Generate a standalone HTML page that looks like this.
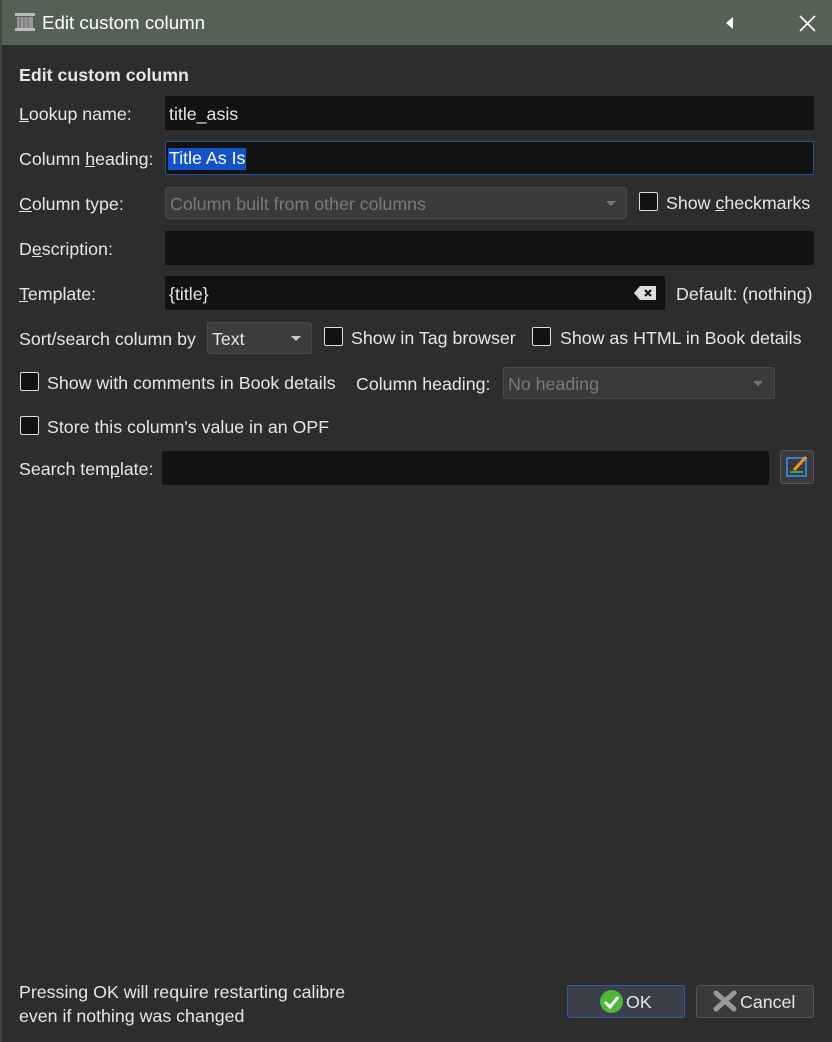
<!DOCTYPE html>
<html><head><style>
body{margin:0;width:832px;height:1042px;background:#2d2d2d;font-family:"Liberation Sans",sans-serif;font-size:17.8px;color:#e6e6e6;position:relative;overflow:hidden}
div,span{position:absolute;box-sizing:border-box}
.t{white-space:nowrap;line-height:20px}
.f{background:#121212;border-radius:2px}
.cb{width:19px;height:19px;border:1.5px solid #ddd;background:#121212;border-radius:2px}
.dd{background:#3a3a3a;border:1px solid #4a4a4a;border-radius:3px;color:#777}
.arr{width:0;height:0;border-left:5px solid transparent;border-right:5px solid transparent;border-top:5px solid #777}
u{text-decoration:underline}
</style></head><body>
<div style="left:0;top:0;width:832px;height:45px;background:#566155"></div>
<div style="left:0;top:0;width:2px;height:1042px;background:#3d4a3d"></div>
<svg style="position:absolute;left:14px;top:12px" width="22" height="20"><rect x="1" y="1" width="20" height="3" fill="#bbb"/><rect x="3" y="5" width="16" height="11" fill="#999"/><g stroke="#666"><line x1="6" y1="5" x2="6" y2="16"/><line x1="10" y1="5" x2="10" y2="16"/><line x1="14" y1="5" x2="14" y2="16"/></g><rect x="1" y="16" width="20" height="3" fill="#bbb"/></svg>
<div class="t" style="left:42px;top:13px;color:#fff;font-size:18.7px">Edit custom column</div>
<div style="left:726px;top:17px;width:0;height:0;border-top:6px solid transparent;border-bottom:6px solid transparent;border-right:7px solid #fff"></div>
<svg style="position:absolute;left:799px;top:15px" width="17" height="17"><path d="M1 1L16 16M16 1L1 16" stroke="#fff" stroke-width="1.6"/></svg>

<div class="t" style="left:19px;top:65px;font-weight:bold">Edit custom column</div>

<div class="t" style="left:19px;top:104px"><u>L</u>ookup name:</div>
<div class="f" style="left:165px;top:96px;width:649px;height:34px"></div>
<div class="t" style="left:169px;top:104px">title_asis</div>

<div class="t" style="left:19px;top:149px">Column <u>h</u>eading:</div>
<div class="f" style="left:165px;top:141px;width:649px;height:34px;border:1px solid #2a4f9a"></div>
<div class="t" style="left:168px;top:148px;background:#1252c8;color:#fff;padding:0 1px;height:22px">Title As Is</div>

<div class="t" style="left:19px;top:194px"><u>C</u>olumn type:</div>
<div class="dd" style="left:165px;top:187px;width:462px;height:32px"></div>
<div class="t" style="left:170px;top:194px;color:#7a7a7a">Column built from other columns</div>
<div class="arr" style="left:606px;top:201px"></div>
<div class="cb" style="left:639px;top:192px"></div>
<div class="t" style="left:666px;top:193px">Show <u>c</u>heckmarks</div>

<div class="t" style="left:19px;top:239px">D<u>e</u>scription:</div>
<div class="f" style="left:165px;top:231px;width:649px;height:34px"></div>

<div class="t" style="left:19px;top:284px"><u>T</u>emplate:</div>
<div class="f" style="left:165px;top:276px;width:500px;height:34px"></div>
<div class="t" style="left:169px;top:284px">{title}</div>
<svg style="position:absolute;left:633px;top:285px" width="24" height="16"><path d="M7 1H23V15H7L1 8Z" fill="#ddd"/><path d="M12 5L18 11M18 5L12 11" stroke="#121212" stroke-width="2.2"/></svg>
<div class="t" style="left:676px;top:284px">Default: (nothing)</div>

<div class="t" style="left:19px;top:329px">Sort/search column by</div>
<div class="dd" style="left:207px;top:322px;width:105px;height:32px;background:#3c3c3c;color:#e6e6e6"></div>
<div class="t" style="left:212px;top:329px">Text</div>
<div class="arr" style="left:291px;top:336px;border-top-color:#ccc"></div>
<div class="cb" style="left:324px;top:327px"></div>
<div class="t" style="left:351px;top:328px">Show in Tag browser</div>
<div class="cb" style="left:532px;top:327px"></div>
<div class="t" style="left:560px;top:328px">Show as HTML in Book details</div>

<div class="cb" style="left:20px;top:372px"></div>
<div class="t" style="left:47px;top:373px">Show with comments in Book details</div>
<div class="t" style="left:356px;top:374px">Column heading:</div>
<div class="dd" style="left:503px;top:367px;width:272px;height:32px"></div>
<div class="t" style="left:508px;top:374px;color:#7a7a7a">No heading</div>
<div class="arr" style="left:753px;top:381px"></div>

<div class="cb" style="left:20px;top:416px"></div>
<div class="t" style="left:47px;top:417px">Store this column's value in an OPF</div>

<div class="t" style="left:19px;top:459px">Search tem<u>p</u>late:</div>
<div class="f" style="left:162px;top:451px;width:607px;height:34px"></div>
<div style="left:780px;top:450px;width:34px;height:34px;background:#3a3a3a;border:1px solid #555;border-radius:3px"></div>
<svg style="position:absolute;left:785px;top:455px" width="24" height="24"><rect x="2" y="3" width="19" height="18" fill="none" stroke="#3a7bd5" stroke-width="2"/><path d="M9 15L21 2" stroke="#e8961e" stroke-width="3"/><line x1="5" y1="17" x2="18" y2="17" stroke="#3aa84a" stroke-width="2"/></svg>

<div class="t" style="left:19px;top:980px;line-height:24px">Pressing OK will require restarting calibre<br>even if nothing was changed</div>
<div style="left:567px;top:985px;width:118px;height:33px;background:#3a3f4a;border:1.5px solid #2f5eb0;border-radius:3px"></div>
<svg style="position:absolute;left:599px;top:989px" width="25" height="25"><circle cx="12.5" cy="12.5" r="11.5" fill="#4fb83b"/><path d="M6 13L11 18L19 8" fill="none" stroke="#fff" stroke-width="3"/></svg>
<div class="t" style="left:626px;top:992px">OK</div>
<div style="left:696px;top:985px;width:118px;height:33px;background:#3a3a3a;border:1px solid #555;border-radius:3px"></div>
<svg style="position:absolute;left:713px;top:989px" width="24" height="24"><path d="M3 4L21 20M21 4L3 20" stroke="#999" stroke-width="5" stroke-linecap="round"/></svg>
<div class="t" style="left:740px;top:992px">Cancel</div>
</body></html>
